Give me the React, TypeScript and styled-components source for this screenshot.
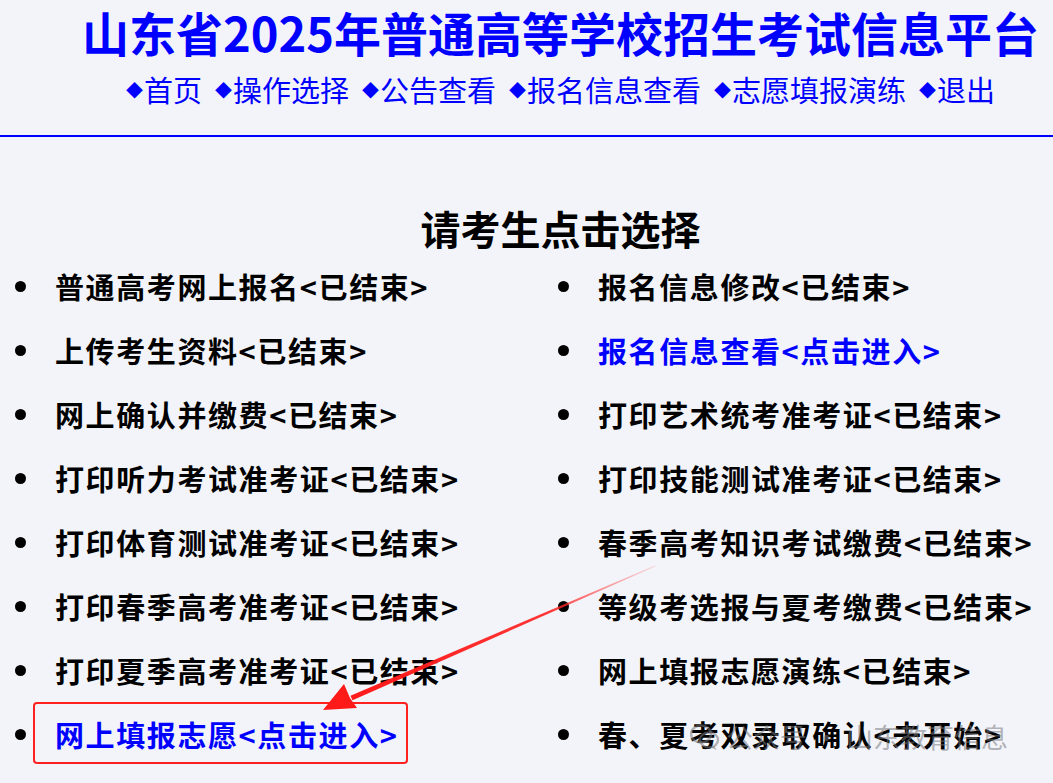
import styled, { createGlobalStyle } from "styled-components";

const GlobalStyle = createGlobalStyle`
  html, body {
    margin: 0;
    padding: 0;
    background: #f3f4f9;
  }
  body {
    font-family: "Noto Sans CJK SC", "Noto Sans", sans-serif;
  }
`;

const navItems = ["首页", "操作选择", "公告查看", "报名信息查看", "志愿填报演练", "退出"];

type Item = { text: string; status: string; active?: boolean; boxed?: boolean };

const leftItems: Item[] = [
  { text: "普通高考网上报名", status: "已结束" },
  { text: "上传考生资料", status: "已结束" },
  { text: "网上确认并缴费", status: "已结束" },
  { text: "打印听力考试准考证", status: "已结束" },
  { text: "打印体育测试准考证", status: "已结束" },
  { text: "打印春季高考准考证", status: "已结束" },
  { text: "打印夏季高考准考证", status: "已结束" },
  { text: "网上填报志愿", status: "点击进入", active: true, boxed: true },
];

const rightItems: Item[] = [
  { text: "报名信息修改", status: "已结束" },
  { text: "报名信息查看", status: "点击进入", active: true },
  { text: "打印艺术统考准考证", status: "已结束" },
  { text: "打印技能测试准考证", status: "已结束" },
  { text: "春季高考知识考试缴费", status: "已结束" },
  { text: "等级考选报与夏考缴费", status: "已结束" },
  { text: "网上填报志愿演练", status: "已结束" },
  { text: "春、夏考双录取确认", status: "未开始" },
];

const App = () => {
  return (
    <Page>
      <GlobalStyle />
      <Header>
        <Title>山东省2025年普通高等学校招生考试信息平台</Title>
        <Nav>
          {navItems.map((n) => (
            <NavLink key={n}>
              <Diamond>◆</Diamond>
              {n}
            </NavLink>
          ))}
        </Nav>
      </Header>

      <Heading>请考生点击选择</Heading>

      <Columns>
        <List>
          {leftItems.map((it) => (
            <Row key={it.text}>
              <Dot />
              <Label $active={it.active} $boxed={it.boxed}>
                {it.text}&lt;{it.status}&gt;
              </Label>
            </Row>
          ))}
        </List>
        <List>
          {rightItems.map((it) => (
            <Row key={it.text}>
              <Dot />
              <Label $active={it.active}>
                {it.text}&lt;{it.status}&gt;
              </Label>
            </Row>
          ))}
        </List>
      </Columns>

      {/* annotation arrow drawn over the list */}
      <Arrow width="1053" height="783" viewBox="0 0 1053 783">
        <defs>
          <linearGradient id="shaft" x1="655" y1="566" x2="350" y2="698" gradientUnits="userSpaceOnUse">
            <stop offset="0" stopColor="#ff5a5a" stopOpacity="0.2" />
            <stop offset="0.35" stopColor="#ff2020" stopOpacity="0.9" />
            <stop offset="1" stopColor="#ff1a1a" />
          </linearGradient>
        </defs>
        <polygon points="655.2,566.5 654.8,565.5 350.5,695.8 352.5,700.2" fill="url(#shaft)" />
        <polygon points="323,710 357,708 350,698 344,684" fill="#ff1a1a" />
      </Arrow>

      <Watermark>
        <svg width="30" height="28" viewBox="0 0 30 28">
          <ellipse cx="11" cy="11" rx="10" ry="8.5" fill="none" stroke="currentColor" strokeWidth="2.4" />
          <ellipse cx="19" cy="17" rx="9" ry="7.5" fill="none" stroke="currentColor" strokeWidth="2.4" />
          <path d="M24 23 L27 27 L21 24.5" fill="currentColor" />
        </svg>
        <span>公众号 · 山东教育信息</span>
      </Watermark>
    </Page>
  );
};

const Page = styled.div`
  position: relative;
  width: 1053px;
  height: 783px;
  overflow: hidden;
`;

const Header = styled.header`
  display: flex;
  flex-direction: column;
  align-items: center;
  padding: 4px 0 25px 68px;
  border-bottom: 2px solid #0000ff;
`;

const Title = styled.h1`
  margin: 0;
  font-size: 47px;
  line-height: 56px;
  font-weight: 700;
  color: #0000ff;
  white-space: nowrap;
`;

const Nav = styled.nav`
  display: flex;
  gap: 13px;
  margin-top: 9px;
  line-height: 40px;
`;

const NavLink = styled.a`
  font-size: 29px;
  color: #0000ff;
  white-space: nowrap;
  cursor: pointer;
`;

const Diamond = styled.span`
  font-size: 17px;
  vertical-align: 5px;
  margin-right: 1px;
`;

const Heading = styled.h2`
  margin: 66px 0 0 68px;
  text-align: center;
  font-size: 40px;
  line-height: 50px;
  font-weight: 700;
  color: #000;
`;

const Columns = styled.div`
  display: grid;
  grid-template-columns: 543px 1fr;
  margin-top: 1px;
`;

const List = styled.ul`
  list-style: none;
  margin: 0;
  padding: 0;
`;

const Row = styled.li`
  display: flex;
  align-items: center;
  height: 64px;
`;

const Dot = styled.span`
  width: 11px;
  height: 11px;
  border-radius: 50%;
  background: #000;
  margin-left: 15px;
  margin-right: 29px;
  flex: none;
`;

const Label = styled.span<{ $active?: boolean; $boxed?: boolean }>`
  position: relative;
  font-size: 29px;
  font-weight: 700;
  letter-spacing: 1.6px;
  white-space: nowrap;
  color: ${(p) => (p.$active ? "#0000ff" : "#000")};
  cursor: ${(p) => (p.$active ? "pointer" : "default")};

  &::after {
    content: "";
    display: ${(p) => (p.$boxed ? "block" : "none")};
    position: absolute;
    left: -22px;
    right: -10px;
    top: -11px;
    bottom: -9px;
    border: 2px solid #ff2020;
    border-radius: 4px;
  }
`;

const Arrow = styled.svg`
  position: absolute;
  left: 0;
  top: 0;
  pointer-events: none;
`;

const Watermark = styled.div`
  position: absolute;
  left: 690px;
  top: 719px;
  display: flex;
  align-items: center;
  gap: 6px;
  color: rgba(120, 120, 125, 0.55);
  font-size: 27px;
  line-height: 36px;
  pointer-events: none;
  white-space: nowrap;
`;

export default App;
